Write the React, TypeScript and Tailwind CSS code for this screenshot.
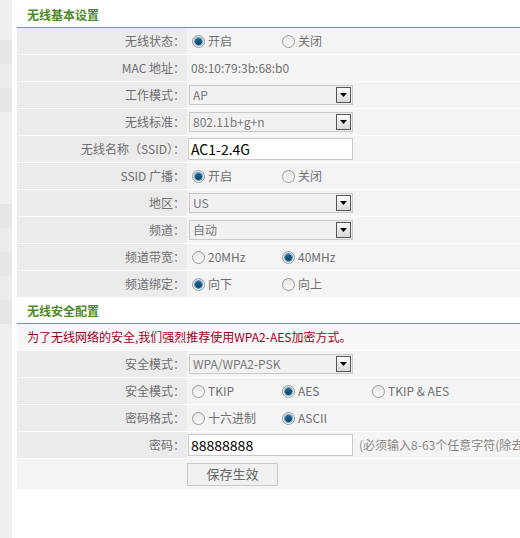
import React from 'react';

const font = { fontFamily: '"Microsoft YaHei", "Noto Sans CJK SC", "Noto Sans", sans-serif' };

function Radio({ checked }: { checked?: boolean }) {
  return (
    <span className="relative inline-flex h-[13px] w-[13px] items-center justify-center rounded-full border border-[#9a9a9a] bg-gradient-to-b from-[#e6e6e6] to-[#fbfbfb]">
      {checked && (
        <span className="h-[7px] w-[7px] rounded-full bg-gradient-to-b from-[#1d6d9c] to-[#0b3c63] ring-1 ring-[#5aa6d6]" />
      )}
    </span>
  );
}

function RadioGroup({ items }: { items: { label: string; checked?: boolean; w?: string }[] }) {
  return (
    <div className="flex items-center pl-[5px]">
      {items.map((it, i) => (
        <label key={i} className={`flex items-center gap-[3px] ${it.w ?? 'w-[90px]'}`}>
          <Radio checked={it.checked} />
          <span>{it.label}</span>
        </label>
      ))}
    </div>
  );
}

function Select({ value }: { value: string }) {
  return (
    <div className="ml-[2px] flex h-[20px] w-[164px] items-center border border-[#c9c9c9] bg-[#f1f1f1]">
      <span className="flex-1 pl-[3px] text-[#777]">{value}</span>
      <span className="mr-[1px] flex h-[16px] w-[15px] items-center justify-center border border-[#555] bg-gradient-to-b from-[#fdfdfd] to-[#d8d8d8]">
        <svg width="7" height="4" viewBox="0 0 7 4"><path d="M0 0h7L3.5 4z" fill="#000" /></svg>
      </span>
    </div>
  );
}

function TextInput({ value }: { value: string }) {
  return (
    <div className="ml-[1px] flex h-[22px] w-[165px] shrink-0 items-center border border-[#c9c9c9] bg-white pl-[2px] text-[14px] text-black">
      {value}
    </div>
  );
}

function Row({ label, children }: { label: string; children: React.ReactNode }) {
  return (
    <div className="flex h-[27px] border-b border-white">
      <div className="flex w-[170px] shrink-0 items-center justify-end bg-[#ebebeb] pr-[2px] text-[#6f6f6f]">{label}</div>
      <div className="flex min-w-0 flex-1 items-center overflow-hidden bg-[#f4f4f4] text-[#6f6f6f]">{children}</div>
    </div>
  );
}

function Header({ title, h }: { title: string; h: string }) {
  return (
    <div className={`flex ${h} items-end border-b border-[#6fa84a] pb-[3px] pl-[10px] font-bold text-[#4b8a25]`}>
      {title}
    </div>
  );
}

export default function App() {
  return (
    <div className="flex h-[538px] w-[520px] overflow-hidden bg-white text-[12px]" style={font}>
      <div className="flex w-[12px] shrink-0 flex-col bg-[#efefef]">
        <div className="h-[40px]" />
        <div className="h-[24px] bg-[#e6e6e6]" />
        <div className="h-[24px] bg-[#ececec]" />
        <div className="h-[24px] bg-[#e6e6e6]" />
        <div className="h-[92px]" />
        <div className="h-[24px] bg-[#e6e6e6]" />
        <div className="h-[24px] bg-[#ececec]" />
        <div className="h-[24px] bg-[#e6e6e6]" />
        <div className="h-[24px] bg-[#ececec]" />
        <div className="h-[24px] bg-[#e6e6e6]" />
      </div>
      <div className="ml-[5px] min-w-0 flex-1">
        <Header title="无线基本设置" h="h-[28px]" />
        <Row label="无线状态：">
          <RadioGroup items={[{ label: '开启', checked: true }, { label: '关闭' }]} />
        </Row>
        <Row label="MAC 地址：">
          <span className="pl-[4px]">08:10:79:3b:68:b0</span>
        </Row>
        <Row label="工作模式：">
          <Select value="AP" />
        </Row>
        <Row label="无线标准：">
          <Select value="802.11b+g+n" />
        </Row>
        <Row label="无线名称（SSID）：">
          <TextInput value="AC1-2.4G" />
        </Row>
        <Row label="SSID 广播：">
          <RadioGroup items={[{ label: '开启', checked: true }, { label: '关闭' }]} />
        </Row>
        <Row label="地区：">
          <Select value="US" />
        </Row>
        <Row label="频道：">
          <Select value="自动" />
        </Row>
        <Row label="频道带宽：">
          <RadioGroup items={[{ label: '20MHz' }, { label: '40MHz', checked: true }]} />
        </Row>
        <Row label="频道绑定：">
          <RadioGroup items={[{ label: '向下', checked: true }, { label: '向上' }]} />
        </Row>
        <Header title="无线安全配置" h="h-[26px]" />
        <div className="flex h-[27px] items-center border-b border-white bg-[#f7f7f7] pl-[10px] text-[#a1001c]">
          为了无线网络的安全,我们强烈推荐使用WPA2-AES加密方式。
        </div>
        <Row label="安全模式：">
          <Select value="WPA/WPA2-PSK" />
        </Row>
        <Row label="安全模式：">
          <RadioGroup
            items={[
              { label: 'TKIP' },
              { label: 'AES', checked: true },
              { label: 'TKIP & AES', w: 'w-[100px]' },
            ]}
          />
        </Row>
        <Row label="密码格式：">
          <RadioGroup items={[{ label: '十六进制' }, { label: 'ASCII', checked: true }]} />
        </Row>
        <Row label="密码：">
          <TextInput value="88888888" />
          <span className="ml-[6px] whitespace-nowrap text-[#888]">(必须输入8-63个任意字符(除去空格))</span>
        </Row>
        <div className="flex h-[30px] items-center bg-[#f4f4f4] pl-[170px]">
          <button className="h-[23px] w-[91px] border border-[#c9c9c9] bg-[#f0f0f0] text-[13px] text-[#666]">保存生效</button>
        </div>
      </div>
    </div>
  );
}
